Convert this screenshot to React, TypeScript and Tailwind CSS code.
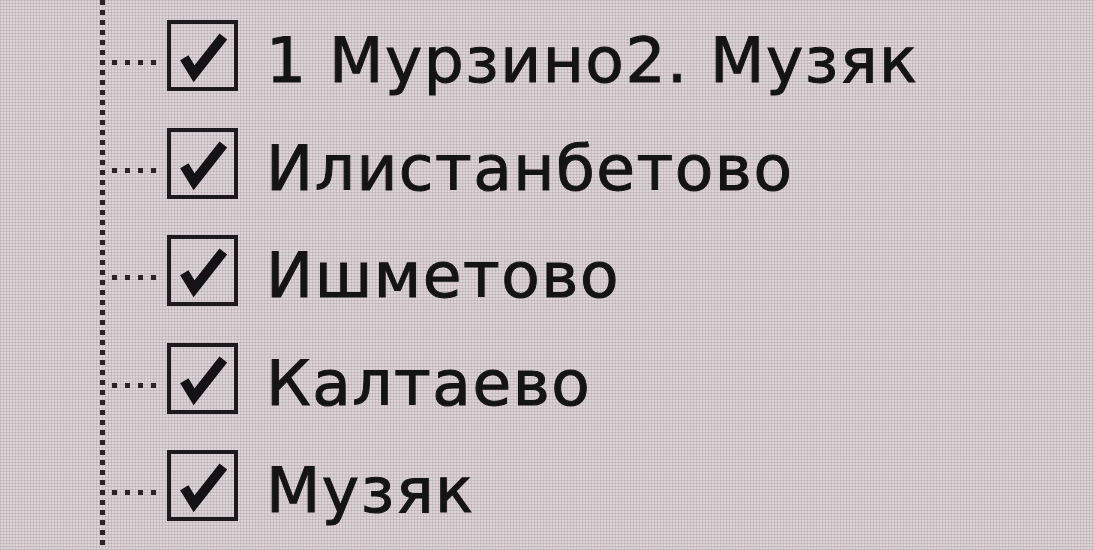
import React from 'react';

const villages = ['1 Мурзино2. Музяк', 'Илистанбетово', 'Ишметово', 'Калтаево', 'Музяк'];

const CheckMark = () => (
  <svg viewBox="0 0 71 71" className="w-full h-full">
    <path d="M15 38 L26 56 L59 14" fill="none" stroke="#151215" strokeWidth="11" strokeLinejoin="miter" />
  </svg>
);

const TreeRow: React.FC<{ label: string }> = ({ label }) => (
  <div className="h-[107.5px] flex items-center">
    {/* horizontal connector */}
    <div className="w-[50px] h-[5px] ml-[7px] mt-[14px] bg-[repeating-linear-gradient(to_right,#2a2428_0_5px,transparent_5px_13px)]" />
    <div className="ml-[5px] w-[71px] h-[71px] border-[4px] border-[#1d191c] flex-none">
      <CheckMark />
    </div>
    <span className="ml-[28px] mt-[10px] text-[63px] leading-none tracking-[1.5px] text-[#151415] whitespace-nowrap [-webkit-text-stroke:1px_#151415]">
      {label}
    </span>
  </div>
);

export default function App() {
  return (
    <div
      className="w-[1094px] h-[550px] overflow-hidden bg-[#ddd4d7] bg-[repeating-linear-gradient(0deg,rgba(90,70,80,0.14)_0_1px,transparent_1px_3px),repeating-linear-gradient(90deg,rgba(90,70,80,0.14)_0_1px,transparent_1px_3px)] flex"
      style={{ fontFamily: '"DejaVu Sans", "Noto Sans", sans-serif' }}
    >
      <div className="w-[100px] flex-none" />
      {/* vertical tree line */}
      <div className="w-[5px] h-full flex-none bg-[repeating-linear-gradient(to_bottom,#2a2428_0_5px,transparent_5px_10px)]" />
      <div className="flex flex-col pt-[2px]">
        {villages.map(v => (
          <TreeRow key={v} label={v} />
        ))}
      </div>
    </div>
  );
}
